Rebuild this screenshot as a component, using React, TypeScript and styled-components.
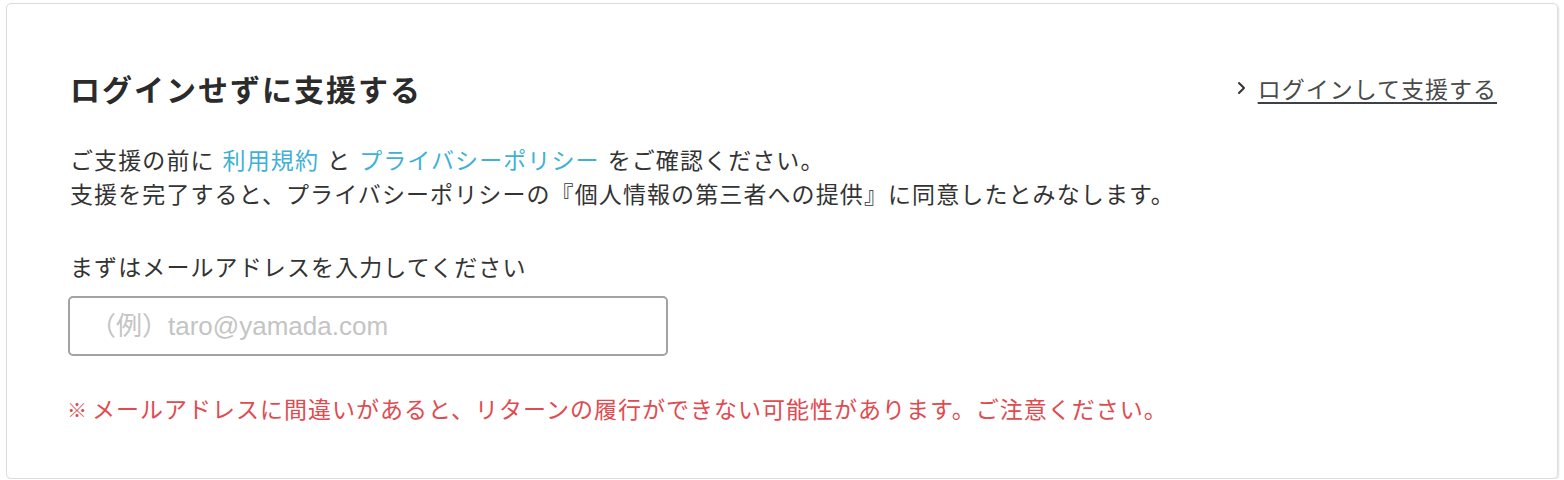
import React from 'react';
import styled, { createGlobalStyle } from 'styled-components';

const GlobalStyle = createGlobalStyle`
  body {
    margin: 0;
    background: #fff;
    font-family: "Noto Sans CJK JP", "Noto Sans", sans-serif;
    color: #333;
  }
`;

const Page = styled.div`
  padding: 3px 6px 0;
`;

const Card = styled.section`
  box-sizing: border-box;
  width: 1552px;
  height: 476px;
  border: 1px solid #dcdcdc;
  border-radius: 5px;
  box-shadow: 1px 1px 2px rgba(0, 0, 0, 0.12);
  padding: 63px 60px 0 63px;
`;

const Header = styled.div`
  display: flex;
  justify-content: space-between;
  align-items: center;
`;

const Title = styled.h2`
  margin: 0;
  font-size: 30px;
  line-height: 42px;
  font-weight: 700;
  letter-spacing: 2px;
  color: #2b2b2b;
`;

const LoginLink = styled.a`
  display: flex;
  align-items: center;
  gap: 12px;
  font-size: 23px;
  line-height: 34px;
  letter-spacing: 1px;
  color: #4a4a4a;
  cursor: pointer;
  span {
    text-decoration: underline;
    text-decoration-thickness: 2px;
    text-underline-offset: 4px;
    text-decoration-color: #3d4148;
  }
`;

const Text = styled.p<{ $top: number }>`
  margin: ${(p) => p.$top}px 0 0;
  font-size: 23px;
  line-height: 34px;
  letter-spacing: 1.1px;
  color: #333;
`;

const InlineLink = styled.a`
  color: #3fb1d6;
  margin: 0 8px;
  cursor: pointer;
`;

const EmailInput = styled.input`
  display: block;
  box-sizing: border-box;
  margin: 13px 0 0 -2px;
  width: 600px;
  height: 60px;
  border: 2px solid #a3a3a3;
  border-radius: 5px;
  padding: 0 20px;
  font-family: "Liberation Sans", "Noto Sans CJK JP", sans-serif;
  font-size: 26px;
  color: #333;
  outline: none;
  &::placeholder {
    color: #c4c4c4;
  }
`;

const Warning = styled.p`
  margin: 35px 0 0;
  font-size: 23px;
  line-height: 34px;
  letter-spacing: 1px;
  color: #e04b50;
`;

const Mark = styled.span`
  font-size: 20px;
  font-weight: 700;
  letter-spacing: 0;
  margin: 0 5px 0 -3px;
`;

const Chevron = () => (
  <svg width="9" height="14" viewBox="0 0 9 14" fill="none">
    <path d="M2 2l5 5-5 5" stroke="#333" strokeWidth="2" strokeLinecap="round" strokeLinejoin="round" />
  </svg>
);

export default function App() {
  return (
    <Page>
      <GlobalStyle />
      <Card>
        <Header>
          <Title>ログインせずに支援する</Title>
          <LoginLink>
            <Chevron />
            <span>ログインして支援する</span>
          </LoginLink>
        </Header>
        <Text $top={33}>
          ご支援の前に<InlineLink>利用規約</InlineLink>と<InlineLink>プライバシーポリシー</InlineLink>をご確認ください。
          <br />
          支援を完了すると、プライバシーポリシーの『個人情報の第三者への提供』に同意したとみなします。
        </Text>
        <Text $top={39}>まずはメールアドレスを入力してください</Text>
        <EmailInput type="email" placeholder="（例）taro@yamada.com" />
        <Warning>
          <Mark>※</Mark>メールアドレスに間違いがあると、リターンの履行ができない可能性があります。ご注意ください。
        </Warning>
      </Card>
    </Page>
  );
}
